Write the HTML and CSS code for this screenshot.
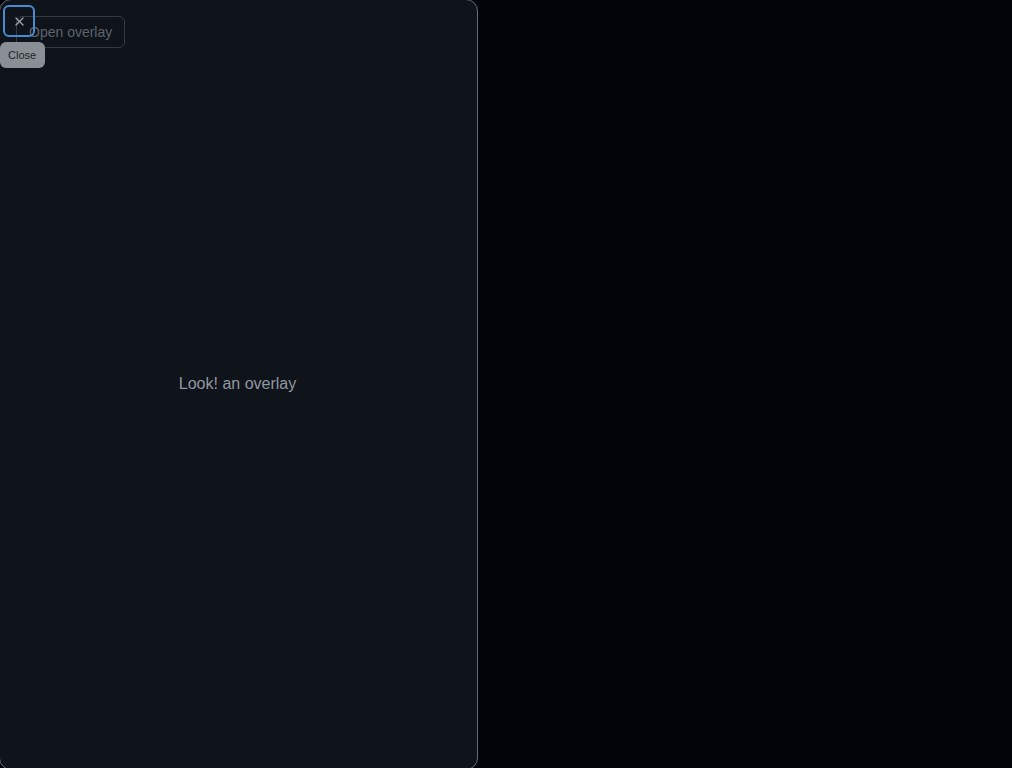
FILE: index.html
```html
<!DOCTYPE html>
<html>
<head>
<meta charset="utf-8">
<link rel="stylesheet" href="styles.css">
</head>
<body>
<main class="page">
  <button class="open-btn">Open overlay</button>
</main>
<div class="overlay">
  <div class="overlay-body">Look! an overlay</div>
</div>
<button class="close-btn" aria-label="Close">
  <svg width="16" height="16" viewBox="0 0 16 16"><path d="M3.72 3.72a.75.75 0 0 1 1.06 0L8 6.94l3.22-3.22a.75.75 0 1 1 1.06 1.06L9.06 8l3.22 3.22a.75.75 0 1 1-1.06 1.06L8 9.06l-3.22 3.22a.75.75 0 0 1-1.06-1.06L6.94 8 3.72 4.78a.75.75 0 0 1 0-1.06Z" fill="currentColor"/></svg>
</button>
<div class="tooltip">Close</div>
</body>
</html>
```
FILE: styles.css
```css
html, body {
  margin: 0;
  height: 100%;
  background: #010409;
  font-family: "Liberation Sans", Arial, sans-serif;
}
.page {
  padding: 16px;
  position: relative;
  z-index: 2;
}
.open-btn {
  height: 32px;
  padding: 0 12px;
  font-family: inherit;
  font-size: 14px;
  color: #5d646d;
  background: transparent;
  border: 1px solid #343a42;
  border-radius: 6px;
}
.overlay {
  position: absolute;
  z-index: 1;
  top: -1px;
  left: -1px;
  width: 477px;
  height: 769px;
  background: #0f131a;
  border: 1px solid #656c76;
  border-radius: 12px;
  display: flex;
}
.overlay-body {
  flex: 1;
  display: flex;
  align-items: center;
  justify-content: center;
  color: #9198a1;
  font-size: 16px;
  padding-right: 2px;
  padding-bottom: 2px;
}
.close-btn {
  position: absolute;
  z-index: 3;
  top: 5px;
  left: 3px;
  width: 32px;
  height: 32px;
  padding: 0;
  display: flex;
  align-items: center;
  justify-content: center;
  color: #9aa1aa;
  background: transparent;
  border: 2px solid #4a8ad0;
  border-radius: 6px;
}
.close-btn svg {
  width: 15px;
  height: 15px;
}
.tooltip {
  position: absolute;
  z-index: 4;
  top: 42px;
  left: 0;
  width: 45px;
  height: 26px;
  box-sizing: border-box;
  padding-left: 8px;
  display: flex;
  align-items: center;
  font-size: 11px;
  color: #1f2328;
  background: #8a8f95;
  border-radius: 6px;
}
```
